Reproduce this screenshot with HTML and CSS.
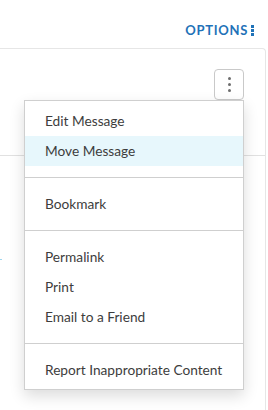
FILE: index.html
```html
<!DOCTYPE html>
<html lang="en">
<head>
    <meta charset="UTF-8">
    <title>Message options</title>
    <link rel="stylesheet" href="styles.css">
</head>
<body>
<div class="options_bar">
    <a class="options_link" href="#">OPTIONS<span class="options_dots"><i></i><i></i><i></i></span></a>
</div>
<div class="card">
    <div class="card_head">
        <div class="menu_wrap">
            <button class="kebab" type="button"><i></i><i></i><i></i></button>
            <div class="menu">
                <ul class="group">
                    <li>Edit Message</li>
                    <li class="active">Move Message</li>
                </ul>
                <ul class="group">
                    <li>Bookmark</li>
                </ul>
                <ul class="group">
                    <li>Permalink</li>
                    <li>Print</li>
                    <li>Email to a Friend</li>
                </ul>
                <ul class="group">
                    <li>Report Inappropriate Content</li>
                </ul>
            </div>
        </div>
    </div>
    <div class="card_body">
        <span class="stub"></span>
    </div>
</div>
</body>
</html>
```

FILE: styles.css
```css
* {
    margin: 0;
    padding: 0;
    box-sizing: border-box;
}
ul, li {
    list-style: none;
}
body {
    background: #fff;
    font-family: Lato, "Open Sans", sans-serif;
    color: #333;
    overflow: hidden;
}
.options_bar {
    height: 48px;
    display: flex;
    justify-content: flex-end;
    align-items: flex-start;
    padding: 23px 14px 0 0;
}
.options_link {
    display: flex;
    align-items: center;
    color: #1f72b8;
    font-size: 13px;
    font-weight: 700;
    letter-spacing: 0.7px;
    text-decoration: none;
    line-height: 14px;
}
.options_dots {
    display: flex;
    flex-direction: column;
    gap: 1px;
    margin-left: 3px;
}
.options_dots i {
    display: block;
    width: 3px;
    height: 3px;
    background: #1f72b8;
}
.card {
    margin: 0 2px 0 -10px;
    height: 362px;
    border: 1px solid #e6e6e6;
    border-bottom: 0;
    border-radius: 4px 4px 0 0;
}
.card_head {
    height: 107px;
    border-bottom: 1px solid #e1e1e1;
    display: flex;
    justify-content: flex-end;
    padding: 20px 21px 0 0;
}
.menu_wrap {
    position: relative;
    width: 30px;
    height: 31px;
}
.kebab {
    width: 30px;
    height: 31px;
    background: #fff;
    border: 1px solid #c9c9c9;
    border-radius: 4px;
    display: flex;
    flex-direction: column;
    align-items: center;
    justify-content: center;
    gap: 3px;
    cursor: pointer;
}
.kebab i {
    display: block;
    width: 3px;
    height: 3px;
    border-radius: 50%;
    background: #6d6d6d;
}
.menu {
    position: absolute;
    top: 31px;
    right: 0;
    width: 220px;
    background: #fff;
    border: 1px solid #cfcfcf;
    box-shadow: 0 6px 14px rgba(0, 0, 0, .14);
    padding: 5px 0 4px;
    z-index: 2;
}
.menu .group {
    padding: 11px 0;
    border-top: 1px solid #cfcfcf;
}
.menu .group:first-child {
    padding-top: 0;
    border-top: 0;
}
.menu .group:last-child {
    padding-bottom: 0;
}
.menu li {
    height: 30px;
    line-height: 30px;
    padding-left: 20px;
    font-size: 13.7px;
    color: #3d3d3d;
    white-space: nowrap;
}
.menu li.active {
    background: #e7f7fc;
}
.card_body {
    position: relative;
    height: 240px;
}
.stub {
    position: absolute;
    left: 9px;
    top: 103px;
    width: 2px;
    height: 1px;
    background: #9fd6ee;
}
```
